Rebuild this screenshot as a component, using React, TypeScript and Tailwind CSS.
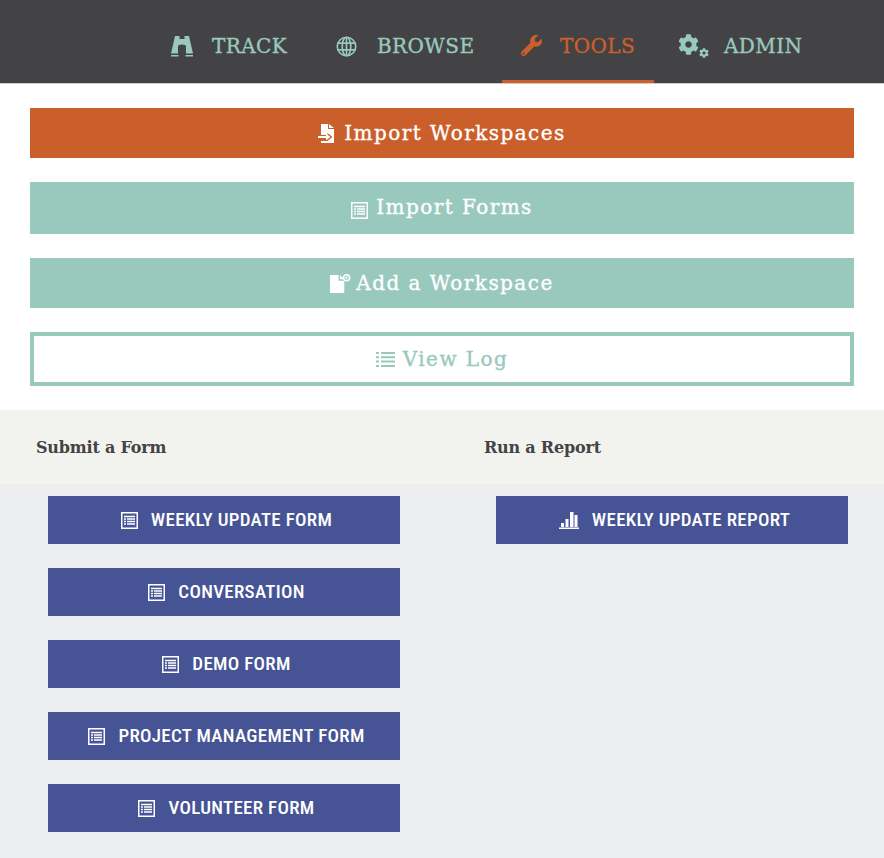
import { FaCog, FaWrench } from "react-icons/fa";

const FormIcon = ({ className }: { className?: string }) => (
  <svg viewBox="0 0 17 17" className={className} fill="none" stroke="currentColor">
    <rect x="0.75" y="0.75" width="15.5" height="15.5" strokeWidth="1.5" />
    <path d="M3 4.5h11M3 7h2M6 7h8M3 9.5h2M6 9.5h8M3 12h2M6 12h8" strokeWidth="1.3" />
  </svg>
);

const BarsIcon = ({ className }: { className?: string }) => (
  <svg viewBox="0 0 20 17" className={className} fill="currentColor">
    <path d="M0 15.500h20V17H0zM2 11h3v4H2zM6.500 7h3v8h-3zM11 0h3.500v15H11zM15.500 3h3v12h-3z" />
  </svg>
);

const BinocularsIcon = () => (
  <svg viewBox="0 0 22 21" className="w-[22px] h-[21px] shrink-0" fill="currentColor">
    <path d="M4 0h4.500v3H13.500V0H18l4 17.500H15v-7q0-2-4-2t-4 2v7H0zM0 19h7.500v1.500H0zM14.500 19H22v1.500h-7.500z" />
  </svg>
);

const GlobeIcon = () => (
  <svg viewBox="0 0 22 22" className="w-[21px] h-[21px] shrink-0" fill="none" stroke="currentColor" strokeWidth="1.700">
    <circle cx="11" cy="11" r="9.700" />
    <ellipse cx="11" cy="11" rx="4.500" ry="9.700" />
    <path d="M11 1v20M1.500 7.500h19M1.500 14.500h19" />
  </svg>
);

const ImportIcon = () => (
  <svg viewBox="0 0 17 19" className="w-[17px] h-[19px] shrink-0" fill="currentColor">
    <path d="M3 0h7v5h6v14H3v-2h6.500l5-4-5-4v2H3zM11 0l5 4h-5z" />
    <path d="M0 12h8V9.800L12.500 13 8 16.200V14H0z" />
  </svg>
);

const AddFileIcon = () => (
  <svg viewBox="0 0 22 20" className="w-[21px] h-[19px] shrink-0" fill="currentColor">
    <path d="M0 1h9v6h6v13H0zM10.500 1l4.500 4.500h-4.500z" />
    <path fillRule="evenodd" d="M17.500 0a4 4 0 1 1 0 8 4 4 0 0 1 0-8zm0 1.600a2.400 2.400 0 1 0 0 4.800 2.400 2.400 0 0 0 0-4.800z" />
    <path d="M17 2.500h1v3h-1zM16 3.500h3v1h-3z" />
  </svg>
);

const ListIcon = () => (
  <svg viewBox="0 0 19 16" className="w-[19px] h-[16px] shrink-0" fill="currentColor">
    <path d="M0 1h3v2H0zM5 1h14v2H5zM0 5.300h3v2H0zM5 5.300h14v2H5zM0 9.600h3v2H0zM5 9.600h14v2H5zM0 13.900h3v2H0zM5 13.900h14v2H5z" />
  </svg>
);

const navItems = [
  { label: "TRACK", icon: <BinocularsIcon />, width: "w-[157px]", gap: "gap-[19px]" },
  { label: "BROWSE", icon: <GlobeIcon />, width: "w-[178px]", gap: "gap-[20px]" },
];

const formNames = ["WEEKLY UPDATE FORM", "CONVERSATION", "DEMO FORM", "PROJECT MANAGEMENT FORM", "VOLUNTEER FORM"];

const FormButton = ({ label, icon }: { label: string; icon: React.ReactNode }) => (
  <a className="h-12 w-[352px] pl-[5px] bg-[#465495] text-white flex items-center justify-center gap-[13px] font-['Roboto',sans-serif] font-medium text-[19px] tracking-[0.3px] [font-stretch:75%]">
    {icon}
    <span>{label}</span>
  </a>
);

export default function App() {
  const slab = "font-['DejaVu_Serif',serif]";
  return (
    <div className={`min-h-[858px] bg-white ${slab} [-webkit-text-stroke:0.35px]`}>
      <nav className="h-[84px] bg-[#434345] border-b border-[#cccccc] flex pl-[151px] text-[#99c9bc] text-[20px] tracking-[0.4px]">
        <a className={`${navItems[0].width} ${navItems[0].gap} mr-[8px] flex items-center px-[20px] pt-[9px]`}>
          {navItems[0].icon}
          <span>{navItems[0].label}</span>
        </a>
        <a className={`${navItems[1].width} ${navItems[1].gap} mr-[6px] flex items-center px-[20px] pt-[9px]`}>
          {navItems[1].icon}
          <span>{navItems[1].label}</span>
        </a>
        <a className="w-[152px] ml-[2px] flex items-center gap-[18px] px-[19px] pt-[11px] border-b-[3px] border-[#cb5f2b] text-[#cb5f2b]">
          <FaWrench className="w-[21px] h-[21px] shrink-0 -scale-x-100 rotate-90" />
          <span>TOOLS</span>
        </a>
        <a className="flex items-center gap-[15px] ml-[24px] pt-[9px]">
          <span className="relative w-[31px] h-[24px]">
            <FaCog className="absolute left-0 top-0 w-[21px] h-[21px]" />
            <FaCog className="absolute right-0 bottom-0 w-[10px] h-[10px]" />
          </span>
          <span>ADMIN</span>
        </a>
      </nav>

      <div className="px-[30px] pt-6 pb-6 flex flex-col gap-6 text-white text-[20px] tracking-[1.45px]">
        <a className="h-[50px] bg-[#cb5f2b] flex items-center justify-center gap-[9px]">
          <ImportIcon />
          <span>Import Workspaces</span>
        </a>
        <a className="h-[52px] bg-[#99c9bc] flex items-center justify-center gap-[8px]">
          <FormIcon className="w-[17px] h-[17px] mt-1" />
          <span className="-mt-[2px]">Import Forms</span>
        </a>
        <a className="h-[50px] bg-[#99c9bc] flex items-center justify-center gap-[5px]">
          <AddFileIcon />
          <span>Add a Workspace</span>
        </a>
        <a className="h-[54px] bg-white border-4 border-[#99c9bc] text-[#99c9bc] flex items-center justify-center gap-[8px]">
          <ListIcon />
          <span>View Log</span>
        </a>
      </div>

      <div className="grid grid-cols-[448px_1fr] bg-[#f2f2ee] h-[74px] items-center pl-[36px] text-[#434345] text-[16px] font-bold tracking-[-0.2px] pt-[1px] [-webkit-text-stroke:0px]">
        <h4>Submit a Form</h4>
        <h4>Run a Report</h4>
      </div>

      <div className="bg-[#edeef0] h-[374px] flex pt-3 pl-[48px] gap-[96px] [-webkit-text-stroke:0px]">
        <div className="flex flex-col gap-6">
          {formNames.map((name) => (
            <FormButton key={name} label={name} icon={<FormIcon className="w-[17px] h-[17px]" />} />
          ))}
        </div>
        <div>
          <FormButton label="WEEKLY UPDATE REPORT" icon={<BarsIcon className="w-5 h-[17px]" />} />
        </div>
      </div>
    </div>
  );
}
